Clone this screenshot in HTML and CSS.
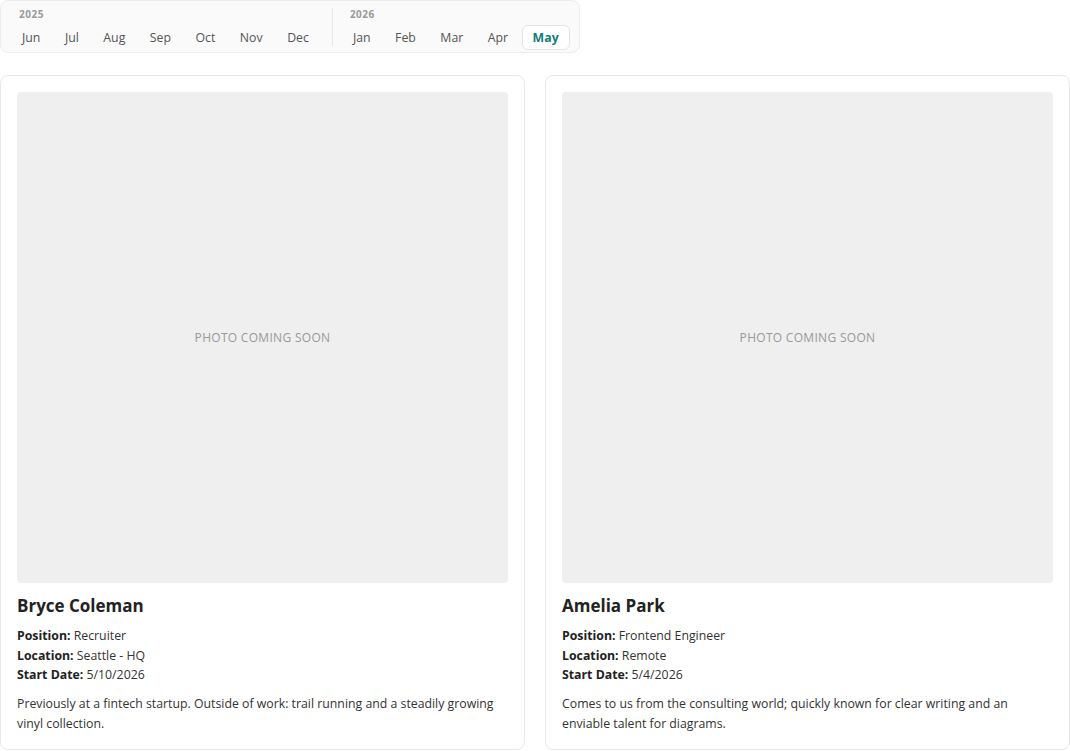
FILE: index.html
```html
<!DOCTYPE html>
<html>
    <head>
        <meta charset="UTF-8">
        <meta name="viewport" content="width=device-width, initial-scale=1.0">
        <link rel="stylesheet" href="styles.css">
    </head>
    <body>

        <div class="timeline">
            <div class="year">
                <div class="year-label">2025</div>
                <div class="months">
                    <button class="month">Jun</button>
                    <button class="month">Jul</button>
                    <button class="month">Aug</button>
                    <button class="month">Sep</button>
                    <button class="month">Oct</button>
                    <button class="month">Nov</button>
                    <button class="month">Dec</button>
                </div>
            </div>
            <div class="divider"></div>
            <div class="year">
                <div class="year-label">2026</div>
                <div class="months">
                    <button class="month">Jan</button>
                    <button class="month">Feb</button>
                    <button class="month">Mar</button>
                    <button class="month">Apr</button>
                    <button class="month active">May</button>
                </div>
            </div>
        </div>

        <div class="cards">
            <div class="card">
                <div class="photo">Photo coming soon</div>
                <h3 class="name">Bryce Coleman</h3>
                <div class="details">
                    <div><b>Position:</b> Recruiter</div>
                    <div><b>Location:</b> Seattle - HQ</div>
                    <div><b>Start Date:</b> 5/10/2026</div>
                </div>
                <p class="bio">Previously at a fintech startup. Outside of work: trail running and a steadily growing vinyl collection.</p>
            </div>

            <div class="card">
                <div class="photo">Photo coming soon</div>
                <h3 class="name">Amelia Park</h3>
                <div class="details">
                    <div><b>Position:</b> Frontend Engineer</div>
                    <div><b>Location:</b> Remote</div>
                    <div><b>Start Date:</b> 5/4/2026</div>
                </div>
                <p class="bio">Comes to us from the consulting world; quickly known for clear writing and an enviable talent for diagrams.</p>
            </div>
        </div>

    </body>
</html>
```

FILE: styles.css
```css
body {
    margin: 0;
    font-family: "Open Sans", "Noto Sans", sans-serif;
    font-size: 12.3px;
    color: #333;
}

.timeline {
    display: inline-flex;
    align-items: stretch;
    padding: 7px 9px 2px 10px;
    background-color: #fafafa;
    border: 1px solid #ececec;
    border-radius: 8px;
}

.year-label {
    padding: 0 8px;
    font-size: 10px;
    font-weight: 700;
    line-height: 12px;
    color: #999;
    letter-spacing: 0.5px;
}

.months {
    display: flex;
    gap: 2.5px;
    margin-top: 5px;
}

.month {
    padding: 3px 10px;
    font-family: inherit;
    font-size: 12.3px;
    line-height: 17px;
    color: #555;
    background: none;
    border: 1px solid transparent;
    border-radius: 6px;
}

.month.active {
    background-color: #fff;
    border-color: #e4e4e4;
    color: #127c7a;
    font-weight: 700;
}

.divider {
    width: 1px;
    background-color: #e6e6e6;
    margin: 0 9px 4px 12px;
}

.cards {
    display: grid;
    grid-template-columns: 1fr 1fr;
    gap: 20px;
    margin-top: 22px;
}

.card {
    padding: 16px 16px 15px;
    border: 1px solid #e8e8e8;
    border-radius: 8px;
}

.photo {
    height: 491px;
    display: flex;
    align-items: center;
    justify-content: center;
    background-color: #efefef;
    border-radius: 4px;
    font-size: 12px;
    line-height: 18px;
    padding-top: 1px;
    box-sizing: border-box;
    color: #999;
    text-transform: uppercase;
    letter-spacing: 0.3px;
}

.name {
    margin: 11px 0 9px;
    font-size: 17px;
    line-height: 23px;
    color: #222;
}

.details {
    line-height: 19.5px;
}

.details b {
    color: #222;
}

.bio {
    margin: 9px 0 0;
    line-height: 20px;
}
```
